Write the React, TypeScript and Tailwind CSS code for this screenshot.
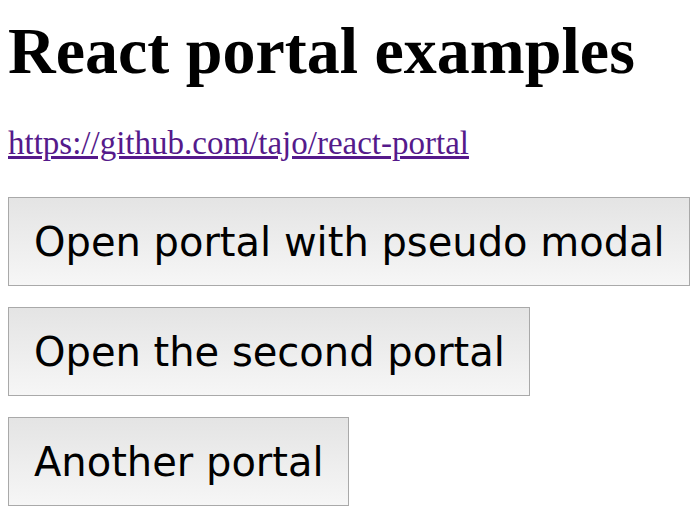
import React from 'react';

const Btn: React.FC<{ label: string }> = ({ label }) => (
  <button className="block h-[89px] border border-[#a9a9a9] bg-gradient-to-b from-[#e4e4e4] to-[#f6f6f6] pl-[25px] pr-[24px] text-left font-['DejaVu_Sans',sans-serif] text-[40px] leading-none text-black">
    {label}
  </button>
);

export default function App() {
  return (
    <div className="min-h-[520px] bg-white px-[8px] pt-[13px]">
      <h1 className="font-['Liberation_Serif',serif] text-[66px] font-bold leading-[76px] text-black">
        React portal examples
      </h1>
      <p className="mt-[36px] font-['Liberation_Serif',serif] text-[33px] leading-[37px]">
        <a href="#" className="text-[#551a8b] underline">
          https://github.com/tajo/react-portal
        </a>
      </p>
      <div className="mt-[35px] flex flex-col items-start gap-[21px]">
        <Btn label="Open portal with pseudo modal" />
        <Btn label="Open the second portal" />
        <Btn label="Another portal" />
      </div>
    </div>
  );
}
